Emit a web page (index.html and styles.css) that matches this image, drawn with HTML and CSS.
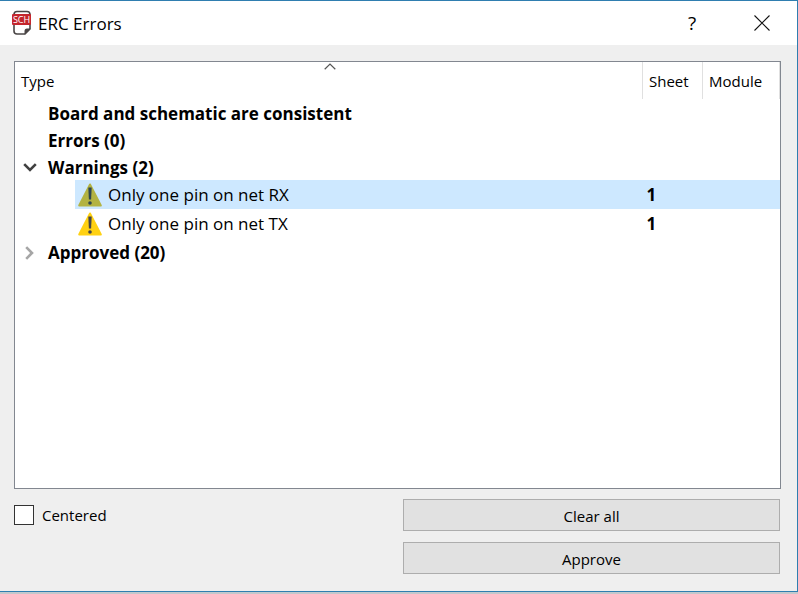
FILE: index.html
```html
<!DOCTYPE html>
<html lang="en">
<head>
    <meta charset="UTF-8">
    <meta name="viewport" content="width=device-width, initial-scale=1.0">
    <title>ERC Errors</title>
    <link rel="stylesheet" href="styles.css">
</head>
<body>
    <div class="dialog">
        <header class="titlebar">
            <svg class="app-icon" width="20" height="26" viewBox="0 0 20 26" aria-hidden="true">
                <path d="M5 1.5h10q3 0 3 3V19l-5 5H5q-3 0-3-3V4.5q0-3 3-3z" fill="#fff" stroke="#4a4646" stroke-width="1.6"/>
                <path d="M12.5 24.5v-3.5q0-2.5 2.5-2.5h3.5z" fill="#4a4646"/>
                <rect x="0" y="4" width="19" height="11" rx="1" fill="#c4262e"/>
                <text class="app-icon-text" x="9.5" y="13" text-anchor="middle">SCH</text>
            </svg>
            <h1>ERC Errors</h1>
            <button class="window-button help" type="button" aria-label="Help">?</button>
            <button class="window-button" type="button" aria-label="Close">
                <svg width="16" height="16" viewBox="0 0 16 16"><path d="M.5.5l15 15M15.5.5l-15 15" stroke="#111" stroke-width="1.1"/></svg>
            </button>
        </header>

        <main class="content">
            <div class="list">
                <svg class="sort-arrow" width="12" height="7" viewBox="0 0 12 7"><path d="M.7 6.2L6 1l5.3 5.2" fill="none" stroke="#555" stroke-width="1.2"/></svg>
                <table>
                    <thead>
                        <tr>
                            <th class="col-type">Type</th>
                            <th class="col-sheet">Sheet</th>
                            <th class="col-module">Module</th>
                        </tr>
                    </thead>
                    <tbody>
                        <tr class="group">
                            <td><div class="cell"><span class="toggle"></span>Board and schematic are consistent</div></td>
                            <td></td>
                            <td></td>
                        </tr>
                        <tr class="group">
                            <td><div class="cell"><span class="toggle"></span>Errors (0)</div></td>
                            <td></td>
                            <td></td>
                        </tr>
                        <tr class="group">
                            <td><div class="cell"><span class="toggle"><svg width="14" height="9" viewBox="0 0 14 9"><path d="M1.2 1.2L7 7l5.8-5.8" fill="none" stroke="#404040" stroke-width="2.6"/></svg></span>Warnings (2)</div></td>
                            <td></td>
                            <td></td>
                        </tr>
                        <tr class="item selected">
                            <td>
                                <div class="cell">
                                    <svg width="24" height="24" viewBox="0 0 24 24"><path d="M12 1.5L22.8 22.5H1.2z" fill="#b3b342" stroke="#b3b342" stroke-width="2" stroke-linejoin="round"/><path d="M10.3 4.5h3.4l-.6 12h-2.2z" fill="#2f4650"/><circle cx="12" cy="20" r="1.8" fill="#2f4650"/></svg>
                                    Only one pin on net RX
                                </div>
                            </td>
                            <td class="sheet">1</td>
                            <td></td>
                        </tr>
                        <tr class="item">
                            <td>
                                <div class="cell">
                                    <svg width="24" height="24" viewBox="0 0 24 24"><path d="M12 1.5L22.8 22.5H1.2z" fill="#ffd112" stroke="#ffd112" stroke-width="2" stroke-linejoin="round"/><path d="M10.3 4.5h3.4l-.6 12h-2.2z" fill="#464648"/><circle cx="12" cy="20" r="1.8" fill="#464648"/></svg>
                                    Only one pin on net TX
                                </div>
                            </td>
                            <td class="sheet">1</td>
                            <td></td>
                        </tr>
                        <tr class="group">
                            <td><div class="cell"><span class="toggle"><svg width="9" height="14" viewBox="0 0 9 14"><path d="M1.2 1.2L7 7l-5.8 5.8" fill="none" stroke="#a6a6a6" stroke-width="2.6"/></svg></span>Approved (20)</div></td>
                            <td></td>
                            <td></td>
                        </tr>
                    </tbody>
                </table>
            </div>

            <div class="footer">
                <div class="option">
                    <input type="checkbox" id="centered">
                    <label for="centered">Centered</label>
                </div>
                <div class="actions">
                    <button type="button">Clear all</button>
                    <button type="button">Approve</button>
                </div>
            </div>
        </main>
    </div>
</body>
</html>
```
FILE: styles.css
```css
* {
    box-sizing: border-box;
}

body {
    margin: 0;
    padding-bottom: 2px;
    background: #c3c8cc;
    color: #000;
    font-family: "Open Sans", "Noto Sans", sans-serif;
    font-size: 17px;
    min-height: 100vh;
    display: flex;
}

.dialog {
    flex: 1;
    display: flex;
    flex-direction: column;
    background: #efefef;
    border: 1px solid #2f7eb0;
    border-left: none;
}

/* Title bar */
.titlebar {
    display: flex;
    align-items: center;
    height: 44px;
    padding-left: 12px;
    background: #fff;
}

.app-icon-text {
    font-family: "Open Sans", sans-serif;
    font-size: 9px;
    fill: #fff;
}

.titlebar h1 {
    flex: 1;
    margin: 0;
    padding-left: 6px;
    font-size: 17px;
    font-weight: normal;
}

.window-button {
    display: flex;
    align-items: center;
    justify-content: center;
    width: 70px;
    height: 44px;
    padding: 0;
    border: none;
    background: none;
}

.help {
    font-family: inherit;
    font-size: 19px;
}

/* Content */
.content {
    flex: 1;
    display: flex;
    flex-direction: column;
    padding: 16px 16px 17px 14px;
}

.list {
    position: relative;
    flex: 1;
    background: #fff;
    border: 1px solid #828790;
}

.sort-arrow {
    position: absolute;
    top: 1px;
    left: 309px;
}

table {
    width: 100%;
    border-collapse: collapse;
    table-layout: fixed;
}

th {
    height: 37px;
    padding: 0 6px;
    font-size: 15px;
    font-weight: normal;
    text-align: left;
    border-right: 1px solid #e0e0e0;
}

.col-sheet {
    width: 60px;
}

.col-module {
    width: 77px;
}

td {
    padding: 0;
}

.cell {
    display: flex;
    align-items: center;
    height: 27px;
    white-space: nowrap;
}

.group {
    font-weight: bold;
}

.group .cell {
    padding-top: 2px;
}

.toggle {
    display: flex;
    justify-content: center;
    width: 29px;
    margin-right: 4px;
}

.item td:first-child {
    padding-left: 60px;
}

.item .cell {
    height: 29px;
    gap: 6px;
    padding-left: 3px;
}

.item .sheet {
    padding-left: 4px;
    font-weight: bold;
}

.selected .cell,
.selected td + td {
    background: #cde8ff;
}

/* Footer */
.footer {
    display: grid;
    grid-template-columns: 1fr 1fr;
    gap: 12px;
    padding: 10px 1px 0 0;
}

.option {
    display: flex;
    align-items: center;
    gap: 8px;
    height: 32px;
    font-size: 15px;
}

.option input {
    appearance: none;
    width: 20px;
    height: 20px;
    margin: 0;
    background: #fff;
    border: 1px solid #333;
}

.actions {
    display: flex;
    flex-direction: column;
    gap: 11px;
}

.actions button {
    height: 32px;
    padding: 2px 0 0;
    font-family: inherit;
    font-size: 15px;
    color: #000;
    background: #e1e1e1;
    border: 1px solid #adadad;
}
```
